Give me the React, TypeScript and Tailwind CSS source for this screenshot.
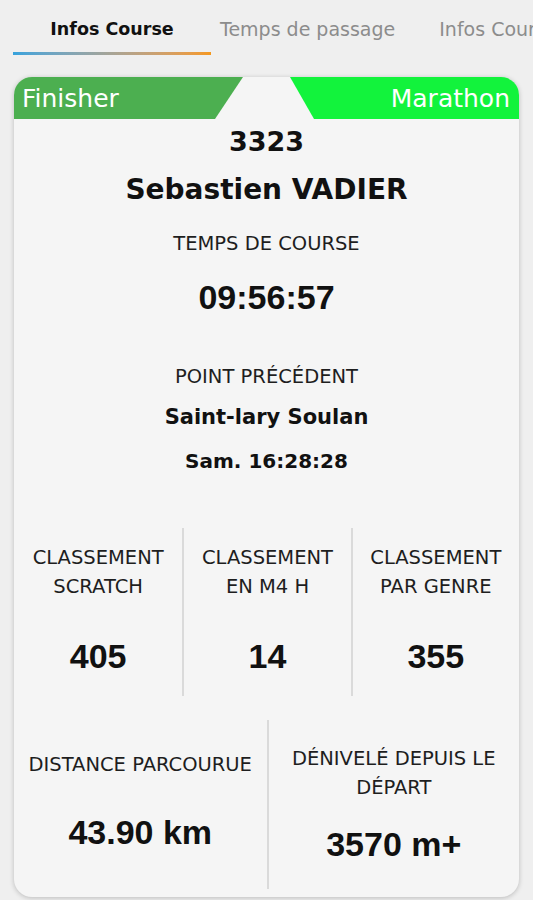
const dv = "font-['DejaVu_Sans',sans-serif]";
const lib = "font-['Liberation_Sans',Arial,sans-serif]";

function Tabs() {
  return (
    <div className="flex items-start overflow-hidden whitespace-nowrap pl-[13px] pt-[17px]">
      <div className="flex w-[198px] shrink-0 flex-col items-center">
        <span className={`${dv} text-[17.5px] font-bold leading-[24px] text-[#111]`}>Infos Course</span>
        <div className="mt-[11px] h-[3px] w-full bg-gradient-to-r from-[#35a2dc] to-[#f5981b]" />
      </div>
      <span className={`${dv} ml-[9px] shrink-0 text-[19px] leading-[24px] text-[#8c8c8c]`}>Temps de passage</span>
      <span className={`${dv} ml-[44px] shrink-0 text-[19px] leading-[24px] text-[#8c8c8c]`}>Infos Course</span>
    </div>
  );
}

function StatCol({ label, value, className = '' }: { label: React.ReactNode; value: string; className?: string }) {
  return (
    <div className={`flex flex-col items-center px-2 text-center ${className}`}>
      <div className={`${dv} text-[19.5px] leading-[29px] text-[#1e1e1e]`}>{label}</div>
      <div className={`${lib} mt-[35px] text-[34px] font-bold leading-[40px] text-[#111]`}>{value}</div>
    </div>
  );
}

export default function App() {
  return (
    <div className="min-h-screen w-[533px] overflow-hidden bg-[#efefef]">
      <Tabs />

      <div className="mx-[14px] mt-[22px] overflow-hidden rounded-[18px] bg-[#f5f5f5] pb-[8px] shadow-[0_1px_5px_rgba(0,0,0,0.22)]">
        {/* statut + course */}
        <div className="flex h-[42px] justify-between">
          <div className="flex w-[229px] items-center bg-[#4caf50] pl-[8px] [clip-path:polygon(0_0,100%_0,calc(100%-28px)_100%,0_100%)]">
            <span className={`${dv} text-[25px] leading-none text-white`}>Finisher</span>
          </div>
          <div className="flex w-[229px] items-center justify-end bg-[#12f33c] pr-[9px] [clip-path:polygon(0_0,100%_0,100%_100%,24px_100%)]">
            <span className={`${dv} text-[25px] leading-none text-white`}>Marathon</span>
          </div>
        </div>

        <div className="flex flex-col items-center text-center">
          <div className={`${dv} mt-[5px] text-[27px] font-bold leading-[36px] text-[#111]`}>3323</div>
          <div className={`${dv} mt-[10px] text-[28px] font-bold leading-[40px] text-[#111]`}>Sebastien VADIER</div>
          <div className={`${dv} mt-[20px] text-[19.5px] leading-[28px] text-[#1e1e1e]`}>TEMPS DE COURSE</div>
          <div className={`${lib} mt-[19px] text-[34px] font-bold leading-[40px] text-[#111]`}>09:56:57</div>
          <div className={`${dv} mt-[46px] text-[19.5px] leading-[28px] text-[#1e1e1e]`}>POINT PRÉCÉDENT</div>
          <div className={`${dv} mt-[10px] text-[21px] font-bold leading-[32px] text-[#111]`}>Saint-lary Soulan</div>
          <div className={`${dv} mt-[12px] text-[20px] font-bold leading-[32px] text-[#111]`}>Sam. 16:28:28</div>
        </div>

        {/* classements */}
        <div className="mt-[51px] grid grid-cols-3">
          <StatCol className="pt-[15px] pb-[20px]" label={<>CLASSEMENT<br />SCRATCH</>} value="405" />
          <StatCol className="border-l-2 border-[#dadada] pt-[15px] pb-[20px]" label={<>CLASSEMENT<br />EN M4 H</>} value="14" />
          <StatCol className="border-l-2 border-[#dadada] pt-[15px] pb-[20px]" label={<>CLASSEMENT<br />PAR GENRE</>} value="355" />
        </div>

        {/* distance / dénivelé */}
        <div className="mt-[24px] grid h-[169px] grid-cols-2">
          <div className="flex flex-col items-center px-3 pt-[30px] text-center">
            <div className={`${dv} text-[19.5px] leading-[29px] text-[#1e1e1e]`}>DISTANCE PARCOURUE</div>
            <div className={`${lib} mt-[33px] text-[34px] font-bold leading-[40px] text-[#111]`}>43.90 km</div>
          </div>
          <div className="flex flex-col items-center border-l-2 border-[#dadada] px-4 pt-[24px] text-center">
            <div className={`${dv} text-[19.5px] leading-[29px] text-[#1e1e1e]`}>DÉNIVELÉ DEPUIS LE DÉPART</div>
            <div className={`${lib} mt-[22px] text-[34px] font-bold leading-[40px] text-[#111]`}>3570 m+</div>
          </div>
        </div>
      </div>
    </div>
  );
}
